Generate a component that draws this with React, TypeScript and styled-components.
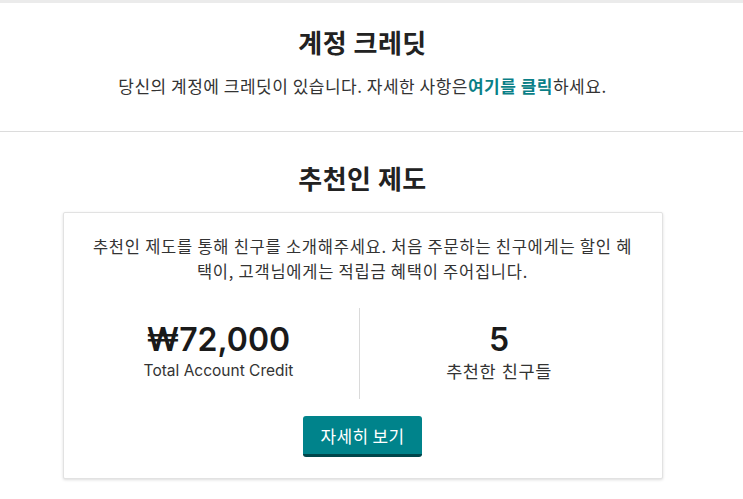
import styled, { createGlobalStyle } from "styled-components";

const GlobalStyle = createGlobalStyle`
	* {
		box-sizing: border-box;
	}
	body {
		margin: 0;
		background: #fff;
		font-family: "Noto Sans CJK KR", "Noto Sans", sans-serif;
		color: #333;
	}
`;

const stats = [
	{ value: "₩72,000", label: "Total Account Credit", lang: "en" },
	{ value: "5", label: "추천한 친구들", lang: "ko" },
];

export default function App() {
	return (
		<>
			<GlobalStyle />
			<Page>
				<Section>
					<Title>계정 크레딧</Title>
					<Lead>
						당신의 계정에 크레딧이 있습니다. 자세한 사항은<Link href="#">여기를 클릭</Link>하세요.
					</Lead>
				</Section>
				<Section $last>
					<Title>추천인 제도</Title>
					<Card>
						<CardText>
							추천인 제도를 통해 친구를 소개해주세요. 처음 주문하는 친구에게는 할인 혜택이, 고객님에게는 적립금 혜택이 주어집니다.
						</CardText>
						<StatRow>
							{stats.map((s, i) => (
								<Stat key={s.label} $divided={i > 0}>
									<StatValue>{s.value}</StatValue>
									<StatLabel lang={s.lang}>{s.label}</StatLabel>
								</Stat>
							))}
						</StatRow>
						<Actions>
							<Button type="button">자세히 보기</Button>
						</Actions>
					</Card>
				</Section>
			</Page>
		</>
	);
}

const Page = styled.div`
	border-top: 3px solid #ebebeb;
`;

const Section = styled.section<{ $last?: boolean }>`
	display: flex;
	flex-direction: column;
	align-items: center;
	padding: ${({ $last }) => ($last ? "29px 18px 18px 0" : "22px 18px 33px 0")};
	border-bottom: ${({ $last }) => ($last ? "none" : "1px solid #dcdcdc")};
`;

const Title = styled.h2`
	margin: 0;
	font-size: 26px;
	line-height: 34px;
	font-weight: 700;
	letter-spacing: 0.5px;
	color: #222;
`;

const Lead = styled.p`
	margin: 15px 0 0;
	font-size: 17px;
	line-height: 24px;
	letter-spacing: 0.5px;
	color: #333;
`;

const Link = styled.a`
	color: #0a7f87;
	font-weight: 700;
	text-decoration: none;
`;

const Card = styled.div`
	width: 600px;
	margin-top: 17px;
	padding: 21px 25px 21px;
	background: #fff;
	border: 1px solid #e2e2e2;
	border-radius: 2px;
	box-shadow: 0 1px 3px rgba(0, 0, 0, 0.14);
`;

const CardText = styled.p`
	margin: 0;
	font-size: 16.5px;
	line-height: 25px;
	letter-spacing: 0.75px;
	text-align: center;
	color: #333;
	word-break: break-all;
`;

const StatRow = styled.div`
	display: grid;
	grid-template-columns: 280px 280px;
	justify-content: center;
	margin: 24px 8px 0 0;
`;

const Stat = styled.div<{ $divided?: boolean }>`
	display: flex;
	flex-direction: column;
	align-items: center;
	padding: 12px 0 17px;
	border-left: ${({ $divided }) => ($divided ? "1px solid #dadada" : "none")};
`;

const StatValue = styled.div`
	font-family: "Inter", "Noto Sans CJK KR", sans-serif;
	font-size: 32px;
	line-height: 40px;
	font-weight: 600;
	color: #1a1a1a;
`;

const StatLabel = styled.div`
	font-family: "Inter", "Noto Sans CJK KR", sans-serif;
	font-size: 15.5px;
	line-height: 22px;
	color: #333;

	&:lang(ko) {
		font-family: "Noto Sans CJK KR", sans-serif;
		font-size: 17.5px;
		letter-spacing: 0.6px;
	}
`;

const Actions = styled.div`
	display: flex;
	justify-content: center;
	margin-top: 17px;
`;

const Button = styled.button`
	height: 41px;
	padding: 0 18px;
	font-family: "Noto Sans CJK KR", sans-serif;
	font-size: 17px;
	letter-spacing: 0.3px;
	color: #fff;
	background: #00838b;
	border: none;
	border-bottom: 3px solid #00464b;
	border-radius: 3px;
	cursor: pointer;
`;
